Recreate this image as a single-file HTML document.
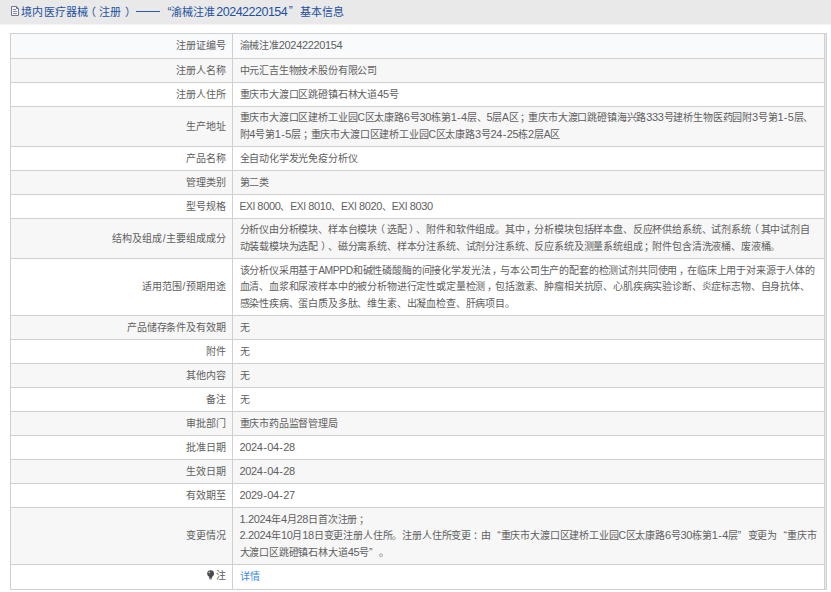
<!DOCTYPE html>
<html lang="zh-CN"><head><meta charset="utf-8">
<style>
html,body{margin:0;padding:0;background:#fff;width:831px;height:592px;overflow:hidden;position:relative}
body{font-family:"Liberation Sans",sans-serif;text-spacing-trim:space-all;font-kerning:none}
.hd{position:absolute;left:0;top:0;width:831px;height:24px;background:#e9e9e9;}
.hd .ic{position:absolute;left:10px;top:5px;}
.hd .tx{position:absolute;left:21px;top:2px;font-size:11px;line-height:14px;color:#1e50a0;white-space:nowrap;letter-spacing:0.1px}
.r{position:absolute;left:10px;width:815px;box-sizing:border-box;}
.l{position:absolute;left:0;top:0;width:222px;height:100%;}
.l .t{position:absolute;right:6px;white-space:nowrap;letter-spacing:-0.08px}
.v{position:absolute;left:222px;top:0;right:0;height:100%;}
.v .t{position:absolute;left:7.5px;white-space:nowrap;}
.t{font-size:10px;line-height:16.5px;color:#606060;letter-spacing:-0.17px}
.hl{position:absolute;height:1px;background:#d0d0d0;}
.vl{position:absolute;width:1px;background:#d0d0d0;}
.d{line-height:0;font-size:11px;letter-spacing:-0.35px} .a{line-height:0;font-size:10.3px;letter-spacing:-0.4px} .pc{position:relative;left:1.8px} .pl{position:relative;left:-2px} .pr{position:relative;left:2.5px} .qo{display:inline-block;width:9.83px;text-align:right;font-size:10.3px;letter-spacing:0} .qc{display:inline-block;width:9.83px;text-align:left;font-size:10.3px;letter-spacing:0} .hy{letter-spacing:0.3px;margin-left:0.6px} .hp{position:absolute;top:2px;font-size:11px;line-height:20px;color:#1e50a0;white-space:nowrap;letter-spacing:0.1px} .hp .d{font-size:12.5px;letter-spacing:-0.5px}
.lnk{color:#4088e8;letter-spacing:0.9px}
.bulb{display:inline-block;vertical-align:-1px;margin-right:1px}
</style></head><body>
<div class="hd"><div style="position:absolute;left:0;top:24px;width:831px;height:1px;background:#f4f4f4"></div><svg class="ic" width="11" height="12" viewBox="0 0 11 12"><path d="M1.5 1.5H6.5L8.5 3.5V10.5H1.5Z" fill="#f4f5f8" stroke="#6f7796" stroke-width="1"/><path d="M6.5 1.5V3.5H8.5" fill="none" stroke="#6f7796" stroke-width="1"/><rect x="3" y="4" width="3" height="1" fill="#8a90aa"/><rect x="3" y="6" width="4" height="1" fill="#8a90aa"/><rect x="3" y="8" width="4" height="1" fill="#8a90aa"/></svg><span class="hp" style="left:21.4px">境内医疗器械</span><span class="hp" style="left:84.8px">（</span><span class="hp" style="left:98.9px">注册</span><span class="hp" style="left:124.6px">）</span><span class="hp" style="left:136px"><span style="display:inline-block;width:23.5px;height:1px;background:#2c5aa6;position:absolute;top:9px;left:0"></span></span><span class="hp" style="left:167.4px"><span style="font-size:12px;position:relative;top:-0.5px">“</span></span><span class="hp" style="left:170.6px">渝械注准</span><span class="hp" style="left:216.3px"><span class="d">20242220154</span></span><span class="hp" style="left:288.8px"><span style="font-size:12px;position:relative;top:-1px">”</span></span><span class="hp" style="left:300.1px">基本信息</span></div>
<div class="r" style="top:33px;height:25px;background:#f8fafc"><div class="l"><div class="t" style="top:5.05px">注册证编号</div></div><div class="v"><div class="t" style="top:5.05px">渝械注准<span class="d">20242220154</span></div></div></div><div class="r" style="top:58px;height:24px;background:#f7f7f7"><div class="l"><div class="t" style="top:4.55px">注册人名称</div></div><div class="v"><div class="t" style="top:4.55px">中元汇吉生物技术股份有限公司</div></div></div><div class="r" style="top:82px;height:24px;background:#fff"><div class="l"><div class="t" style="top:4.55px">注册人住所</div></div><div class="v"><div class="t" style="top:4.55px">重庆市大渡口区跳磴镇石林大道<span class="d">45</span>号</div></div></div><div class="r" style="top:106px;height:40px;background:#f7f7f7"><div class="l"><div class="t" style="top:12.55px">生产地址</div></div><div class="v"><div class="t" style="top:4.30px">重庆市大渡口区建桥工业园<span class="a">C</span>区太康路<span class="d">6</span>号<span class="d">30</span>栋第<span class="d">1<span class="hy">-</span>4</span>层、<span class="d">5</span>层<span class="a">A</span>区<span class="pc">；</span>重庆市大渡口跳磴镇海兴路<span class="d">333</span>号建桥生物医药园附<span class="d">3</span>号第<span class="d">1<span class="hy">-</span>5</span>层、<br>附<span class="d">4</span>号第<span class="d">1<span class="hy">-</span>5</span>层<span class="pc">；</span>重庆市大渡口区建桥工业园<span class="a">C</span>区太康路<span class="d">3</span>号<span class="d">24<span class="hy">-</span>25</span>栋<span class="d">2</span>层<span class="a">A</span>区</div></div></div><div class="r" style="top:146px;height:24px;background:#fff"><div class="l"><div class="t" style="top:4.55px">产品名称</div></div><div class="v"><div class="t" style="top:4.55px">全自动化学发光免疫分析仪</div></div></div><div class="r" style="top:170px;height:24px;background:#f7f7f7"><div class="l"><div class="t" style="top:4.55px">管理类别</div></div><div class="v"><div class="t" style="top:4.55px">第二类</div></div></div><div class="r" style="top:194px;height:24px;background:#fff"><div class="l"><div class="t" style="top:4.55px">型号规格</div></div><div class="v"><div class="t" style="top:4.55px"><span class="a">EXI </span><span class="d">8000</span>、<span class="a">EXI </span><span class="d">8010</span>、<span class="a">EXI </span><span class="d">8020</span>、<span class="a">EXI </span><span class="d">8030</span></div></div></div><div class="r" style="top:218px;height:40px;background:#f7f7f7"><div class="l"><div class="t" style="top:12.55px">结构及组成<span style="margin:0 1px">/</span>主要组成成分</div></div><div class="v"><div class="t" style="top:4.30px">分析仪由分析模块、样本台模块<span class="pl">（</span>选配<span class="pr">）</span>、附件和软件组成。其中<span class="pc">，</span>分析模块包括样本盘、反应杯供给系统、试剂系统<span class="pl">（</span>其中试剂自<br>动装载模块为选配<span class="pr">）</span>、磁分离系统、样本分注系统、试剂分注系统、反应系统及测量系统组成<span class="pc">；</span>附件包含清洗液桶、废液桶。</div></div></div><div class="r" style="top:258px;height:57px;background:#fff"><div class="l"><div class="t" style="top:21.05px">适用范围<span style="margin:0 1px">/</span>预期用途</div></div><div class="v"><div class="t" style="top:4.55px">该分析仪采用基于<span class="a">AMPPD</span>和碱性磷酸酶的间接化学发光法<span class="pc">，</span>与本公司生产的配套的检测试剂共同使用<span class="pc">，</span>在临床上用于对来源于人体的<br>血清、血浆和尿液样本中的被分析物进行定性或定量检测<span class="pc">，</span>包括激素、肿瘤相关抗原、心肌疾病实验诊断、炎症标志物、自身抗体、<br>感染性疾病、蛋白质及多肽、维生素、出凝血检查、肝病项目。</div></div></div><div class="r" style="top:315px;height:24px;background:#f7f7f7"><div class="l"><div class="t" style="top:4.55px">产品储存条件及有效期</div></div><div class="v"><div class="t" style="top:4.55px">无</div></div></div><div class="r" style="top:339px;height:24px;background:#fff"><div class="l"><div class="t" style="top:4.55px">附件</div></div><div class="v"><div class="t" style="top:4.55px">无</div></div></div><div class="r" style="top:363px;height:24px;background:#f7f7f7"><div class="l"><div class="t" style="top:4.55px">其他内容</div></div><div class="v"><div class="t" style="top:4.55px">无</div></div></div><div class="r" style="top:387px;height:24px;background:#fff"><div class="l"><div class="t" style="top:4.55px">备注</div></div><div class="v"><div class="t" style="top:4.55px">无</div></div></div><div class="r" style="top:411px;height:24px;background:#f7f7f7"><div class="l"><div class="t" style="top:4.55px">审批部门</div></div><div class="v"><div class="t" style="top:4.55px">重庆市药品监督管理局</div></div></div><div class="r" style="top:435px;height:24px;background:#fff"><div class="l"><div class="t" style="top:4.55px">批准日期</div></div><div class="v"><div class="t" style="top:4.55px"><span class="d">2024<span class="hy">-</span>04<span class="hy">-</span>28</span></div></div></div><div class="r" style="top:459px;height:24px;background:#f7f7f7"><div class="l"><div class="t" style="top:4.55px">生效日期</div></div><div class="v"><div class="t" style="top:4.55px"><span class="d">2024<span class="hy">-</span>04<span class="hy">-</span>28</span></div></div></div><div class="r" style="top:483px;height:24px;background:#fff"><div class="l"><div class="t" style="top:4.55px">有效期至</div></div><div class="v"><div class="t" style="top:4.55px"><span class="d">2029<span class="hy">-</span>04<span class="hy">-</span>27</span></div></div></div><div class="r" style="top:507px;height:57px;background:#f7f7f7"><div class="l"><div class="t" style="top:21.05px">变更情况</div></div><div class="v"><div class="t" style="top:4.55px"><span class="d">1.2024</span>年<span class="d">4</span>月<span class="d">28</span>日首次注册<span class="pc">；</span><br><span class="d">2.2024</span>年<span class="d">10</span>月<span class="d">18</span>日变更注册人住所。注册人住所变更<span class="pc">：</span>由<span class="qo">“</span>重庆市大渡口区建桥工业园<span class="a">C</span>区太康路<span class="d">6</span>号<span class="d">30</span>栋第<span class="d">1<span class="hy">-</span>4</span>层<span class="qc">”</span>变更为<span class="qo">“</span>重庆市<br>大渡口区跳磴镇石林大道<span class="d">45</span>号<span class="qc">”</span>。</div></div></div><div class="r" style="top:564px;height:25px;background:#fff"><div class="l"><div class="t" style="top:4.05px"><span class="bulb"><svg width="8" height="10" viewBox="0 0 8 10"><circle cx="3.6" cy="3.6" r="3.4" fill="#4a4a4a"/><rect x="2.2" y="6.2" width="2.8" height="2.4" fill="#4a4a4a"/><rect x="2.6" y="8.6" width="2" height="1" fill="#888"/><circle cx="2.3" cy="2.4" r="0.9" fill="#bbb"/></svg></span>注</div></div><div class="v"><div class="t" style="top:5.05px"><span class="lnk">详情</span></div></div></div>
<div class="hl" style="left:10px;top:33px;width:817px"></div><div class="hl" style="left:10px;top:58px;width:815px"></div><div class="hl" style="left:10px;top:82px;width:815px"></div><div class="hl" style="left:10px;top:106px;width:815px"></div><div class="hl" style="left:10px;top:146px;width:815px"></div><div class="hl" style="left:10px;top:170px;width:815px"></div><div class="hl" style="left:10px;top:194px;width:815px"></div><div class="hl" style="left:10px;top:218px;width:815px"></div><div class="hl" style="left:10px;top:258px;width:815px"></div><div class="hl" style="left:10px;top:315px;width:815px"></div><div class="hl" style="left:10px;top:339px;width:815px"></div><div class="hl" style="left:10px;top:363px;width:815px"></div><div class="hl" style="left:10px;top:387px;width:815px"></div><div class="hl" style="left:10px;top:411px;width:815px"></div><div class="hl" style="left:10px;top:435px;width:815px"></div><div class="hl" style="left:10px;top:459px;width:815px"></div><div class="hl" style="left:10px;top:483px;width:815px"></div><div class="hl" style="left:10px;top:507px;width:815px"></div><div class="hl" style="left:10px;top:564px;width:815px"></div><div class="hl" style="left:10px;top:589px;width:817px"></div><div class="vl" style="left:10px;top:33px;height:557px"></div><div class="vl" style="left:232px;top:33px;height:557px"></div><div class="vl" style="left:824px;top:33px;height:556px"></div><div class="vl" style="left:826px;top:33px;height:557px"></div><div style="position:absolute;left:825px;top:34px;width:1px;height:555px;background:#e9e9ec"></div></body></html>
